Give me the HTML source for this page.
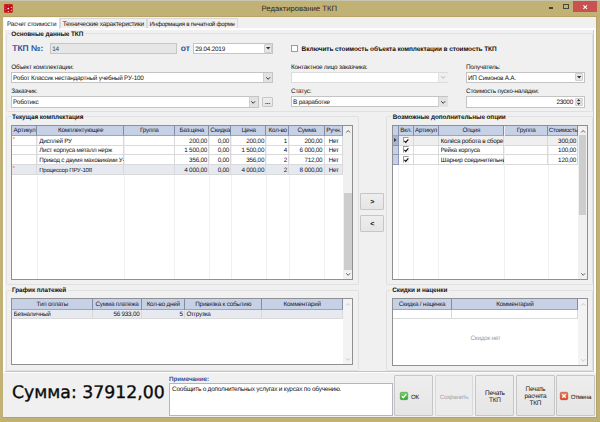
<!DOCTYPE html>
<html lang="ru">
<head>
<meta charset="utf-8">
<title>Редактирование ТКП</title>
<style>
html,body{margin:0;padding:0;}
body{width:600px;height:422px;overflow:hidden;text-rendering:geometricPrecision;background:#c2b175;font-family:"Liberation Sans",sans-serif;font-size:5.95px;color:#141414;position:relative;}
.a{position:absolute;white-space:nowrap;box-sizing:border-box;}
.inp{background:#fff;border:1px solid #c4c4c4;}
.btn{background:linear-gradient(#eeeeee,#e5e5e5);border:1px solid #c6c6c6;border-radius:1px;}
.grid{background:#fff;border:1px solid #8f9094;overflow:hidden;}
.hd{background:#c7d1e6;border-right:1px solid #7f8cab;border-bottom:1px solid #9fa5b3;}
.gb{border:1px solid #e0e0e0;border-radius:1.5px;}
svg{position:absolute;overflow:visible;}
</style>
</head>
<body>
<div class="a" style="left:0px;top:0px;width:600px;height:1.1px;background:#c6c6b3;"></div>
<div class="a" style="left:2.5px;top:16px;width:594.3px;height:401.8px;background:#b5a468;"></div>
<div class="a" style="left:3.2px;top:16.6px;width:593px;height:400.6px;background:#f0f0f0;"></div>
<div class="a" style="left:0px;top:4px;font-size:7.7px;line-height:9px;color:#2a2a2a;width:598.5px;text-align:center;">Редактирование ТКП</div>
<svg style="left:4.2px;top:4px" width="8.8" height="8.8" viewBox="0 0 8.8 8.8"><rect x="0" y="0" width="8.8" height="8.8" rx="1.4" fill="#c20f16"/><rect x=".5" y=".5" width="7.8" height="7.8" rx="1" fill="none" stroke="#d43a3c" stroke-width=".5"/><g fill="#fff"><circle cx="4.3" cy="4.5" r=".85"/><circle cx="7.3" cy="3.5" r=".6"/><circle cx="7.3" cy="6.4" r=".55" opacity=".85"/><circle cx="4.3" cy="7.5" r=".6"/><circle cx="4.3" cy="1.6" r=".45" opacity=".6"/><circle cx="1.8" cy="3" r=".5" opacity=".45"/><circle cx="1.8" cy="5.6" r=".5" opacity=".5"/></g></svg>
<div class="a" style="left:549px;top:7.2px;width:4.1px;height:1.7px;background:#45412f;"></div>
<div class="a" style="left:563px;top:4.3px;width:5.8px;height:4.5px;border:0.9px solid #4a4636;border-top-width:1.7px;"></div>
<div class="a" style="left:573px;top:1.2px;width:24px;height:10.5px;background:#c9514f;"></div>
<svg style="left:582.5px;top:4.5px" width="4.4" height="4.4" viewBox="0 0 4.4 4.4"><path d="M0.4 0.4 L4 4 M4 0.4 L0.4 4" stroke="#fff" stroke-width="1.05" fill="none"/></svg>
<div class="a" style="left:3.3px;top:28.3px;width:592.9px;height:345.2px;background:#fdfdfd;"></div>
<div class="a" style="left:5.3px;top:30.2px;width:588.9px;height:341.7px;background:#f0f0f0;border-right:1px solid #c9c9c9;border-bottom:1px solid #c4c4c4;"></div>
<div class="a" style="left:60px;top:18.3px;width:87px;height:10.2px;background:#f0f0f0;border:1px solid #d9d9d9;border-bottom:none;"></div>
<div class="a" style="left:146.5px;top:18.3px;width:91px;height:10.2px;background:#f0f0f0;border:1px solid #d9d9d9;border-bottom:none;"></div>
<div class="a" style="left:3.3px;top:17.1px;width:56.7px;height:12.2px;background:#fff;border:1px solid #f3f3f3;border-right-color:#dcdcdc;border-bottom:none;"></div>
<div class="a" style="left:3.3px;top:21px;font-size:6.4px;line-height:8px;width:56.7px;text-align:center;letter-spacing:-0.232px;">Расчет стоимости</div>
<div class="a" style="left:60px;top:21px;font-size:6.56px;line-height:8px;width:86.5px;text-align:center;letter-spacing:-0.238px;">Технические характеристики</div>
<div class="a" style="left:146.5px;top:21px;font-size:6.13px;line-height:7px;width:91.5px;text-align:center;letter-spacing:-0.222px;">Информация в печатной форме</div>
<div class="a gb" style="left:6.2px;top:33.2px;width:587.3px;height:79px;"></div>
<div class="a" style="left:9.8px;top:31px;font-size:6.41px;line-height:8px;color:#101010;font-weight:bold;letter-spacing:-0.088px;background:#f0f0f0;padding:0 1.5px;">Основные данные ТКП</div>
<div class="a" style="left:12.2px;top:43px;font-size:8.5px;line-height:10px;color:#34529a;font-weight:bold;">ТКП №:</div>
<div class="a" style="left:50px;top:43px;width:127.3px;height:11.3px;background:#e6e6e6;border:1px solid #c6c6c6;"></div>
<div class="a" style="left:52.3px;top:46px;font-size:6.4px;line-height:8px;color:#444;letter-spacing:-0.232px;">14</div>
<div class="a" style="left:180.7px;top:43px;font-size:8.5px;line-height:10px;color:#34529a;font-weight:bold;">от</div>
<div class="a inp" style="left:193.2px;top:43.2px;width:79.9px;height:10.9px;"></div>
<div class="a" style="left:195.3px;top:46px;font-size:6.4px;line-height:8px;letter-spacing:-0.232px;">29.04.2019</div>
<div class="a btn" style="left:264px;top:44.3px;width:7.8px;height:8.5px;border-color:#cfcfcf;background:#e7e7e7;"></div>
<svg style="left:265.7px;top:47.4px" width="4.4" height="2.6" viewBox="0 0 4.4 2.6"><path d="M0 0 L4.4 0 L2.2 2.6 Z" fill="#333"/></svg>
<div class="a" style="left:291.3px;top:45px;width:6.8px;height:7px;background:#fff;border:1px solid #9c9c9c;"></div>
<div class="a" style="left:301.6px;top:46px;font-size:6.5px;line-height:8px;color:#101010;font-weight:bold;letter-spacing:-0.089px;">Включить стоимость объекта комплектации в стоимость ТКП</div>
<div class="a" style="left:11.3px;top:64px;font-size:6.4px;line-height:8px;letter-spacing:-0.232px;">Объект комплектации:</div>
<div class="a inp" style="left:11.3px;top:71.8px;width:262px;height:11.3px;border-color:#c4c4c4;"></div>
<div class="a" style="left:263.3px;top:72.6px;width:9.2px;height:9.7px;background:#e2e2e2;border-left:1px solid #cfcfcf;"></div>
<svg style="left:265.8px;top:76.55px" width="4.4" height="2.8" viewBox="0 0 4.4 2.8"><path d="M0.3 0.3 L2.2 2.3 L4.1 0.3" stroke="#333" stroke-width="1" fill="none"/></svg>
<div class="a" style="left:13.1px;top:75px;font-size:6.4px;line-height:8px;letter-spacing:-0.232px;">Робот Классик нестандартный учебный РУ-100</div>
<div class="a" style="left:291px;top:64px;font-size:6.4px;line-height:8px;letter-spacing:-0.232px;">Контактное лицо заказчика:</div>
<div class="a inp" style="left:291.3px;top:71.7px;width:157.1px;height:10.9px;border-color:#dcdcdc;"></div>
<div class="a" style="left:438.4px;top:72.5px;width:9.2px;height:9.3px;background:#efefef;border-left:1px solid #e2e2e2;"></div>
<svg style="left:440.9px;top:76.25px" width="4.4" height="2.8" viewBox="0 0 4.4 2.8"><path d="M0.3 0.3 L2.2 2.3 L4.1 0.3" stroke="#b5b5b5" stroke-width="1" fill="none"/></svg>
<div class="a" style="left:466px;top:64px;font-size:6.4px;line-height:8px;letter-spacing:-0.232px;">Получатель:</div>
<div class="a inp" style="left:466px;top:71.7px;width:118.7px;height:10.9px;"></div>
<div class="a" style="left:468px;top:75px;font-size:6.4px;line-height:8px;letter-spacing:-0.232px;">ИП Симонов А.А.</div>
<div class="a btn" style="left:574.7px;top:73px;width:8px;height:8px;border-color:#cfcfcf;background:#e7e7e7;"></div>
<svg style="left:576.5px;top:75.9px" width="4.4" height="2.6" viewBox="0 0 4.4 2.6"><path d="M0 0 L4.4 0 L2.2 2.6 Z" fill="#333"/></svg>
<div class="a" style="left:11.3px;top:88px;font-size:6.4px;line-height:8px;letter-spacing:-0.232px;">Заказчик:</div>
<div class="a inp" style="left:11.3px;top:96.4px;width:247.4px;height:11.2px;border-color:#c4c4c4;"></div>
<div class="a" style="left:248.7px;top:97.2px;width:9.2px;height:9.6px;background:#e2e2e2;border-left:1px solid #cfcfcf;"></div>
<svg style="left:251.2px;top:101.1px" width="4.4" height="2.8" viewBox="0 0 4.4 2.8"><path d="M0.3 0.3 L2.2 2.3 L4.1 0.3" stroke="#333" stroke-width="1" fill="none"/></svg>
<div class="a" style="left:13.1px;top:99px;font-size:6.4px;line-height:8px;letter-spacing:-0.232px;">Роботикс</div>
<div class="a btn" style="left:262.4px;top:96.7px;width:10.4px;height:10.2px;"></div>
<div class="a" style="left:262.4px;top:99px;font-size:6.35px;line-height:8px;color:#111;font-weight:bold;width:10.4px;text-align:center;letter-spacing:-0.087px;">...</div>
<div class="a" style="left:291px;top:88px;font-size:6.4px;line-height:8px;letter-spacing:-0.232px;">Статус:</div>
<div class="a inp" style="left:291.3px;top:96.3px;width:157.1px;height:11.2px;border-color:#c4c4c4;"></div>
<div class="a" style="left:438.4px;top:97.1px;width:9.2px;height:9.6px;background:#e2e2e2;border-left:1px solid #cfcfcf;"></div>
<svg style="left:440.9px;top:101px" width="4.4" height="2.8" viewBox="0 0 4.4 2.8"><path d="M0.3 0.3 L2.2 2.3 L4.1 0.3" stroke="#333" stroke-width="1" fill="none"/></svg>
<div class="a" style="left:293.1px;top:99px;font-size:6.4px;line-height:8px;letter-spacing:-0.232px;">В разработке</div>
<div class="a" style="left:466px;top:88px;font-size:6.4px;line-height:8px;letter-spacing:-0.232px;">Стоимость пуско-наладки:</div>
<div class="a inp" style="left:466px;top:96.3px;width:118.7px;height:11.3px;"></div>
<div class="a" style="left:540px;top:99px;font-size:6.4px;line-height:8px;width:33px;text-align:right;letter-spacing:-0.232px;">23000</div>
<div class="a btn" style="left:574.7px;top:98px;width:8px;height:4.1px;border-color:#cfcfcf;background:#e7e7e7;"></div>
<div class="a btn" style="left:574.7px;top:102px;width:8px;height:4.1px;border-color:#cfcfcf;background:#e7e7e7;"></div>
<svg style="left:577px;top:99.1px" width="3.4" height="6" viewBox="0 0 3.4 6"><path d="M0 1.9 L1.7 0 L3.4 1.9 Z M0 4.1 L1.7 6 L3.4 4.1 Z" fill="#333"/></svg>
<div class="a gb" style="left:6.2px;top:116.3px;width:352.7px;height:168.5px;"></div>
<div class="a" style="left:10.5px;top:114px;font-size:6.41px;line-height:8px;color:#101010;font-weight:bold;letter-spacing:-0.088px;background:#f0f0f0;padding:0 1.5px;">Текущая комплектация</div>
<div class="a grid" style="left:11.3px;top:125px;width:342.2px;height:155px;">
<div class="a" style="left:24.5px;top:0;width:1px;height:155px;background:#f0f0f0;"></div>
<div class="a" style="left:111.5px;top:0;width:1px;height:155px;background:#f0f0f0;"></div>
<div class="a" style="left:161.8px;top:0;width:1px;height:155px;background:#f0f0f0;"></div>
<div class="a" style="left:196.5px;top:0;width:1px;height:155px;background:#f0f0f0;"></div>
<div class="a" style="left:218.5px;top:0;width:1px;height:155px;background:#f0f0f0;"></div>
<div class="a" style="left:253.6px;top:0;width:1px;height:155px;background:#f0f0f0;"></div>
<div class="a" style="left:276.5px;top:0;width:1px;height:155px;background:#f0f0f0;"></div>
<div class="a" style="left:311.8px;top:0;width:1px;height:155px;background:#f0f0f0;"></div>
<div class="a" style="left:330.3px;top:0;width:1px;height:155px;background:#f0f0f0;"></div>
<div class="a" style="left:0;top:39.01px;width:330.9px;height:9.57px;background:#e7e9f0;"></div>
<div class="a" style="left:0px;top:10.3px;width:25.1px;height:9.57px;border-right:1px solid #d9d9d9;border-bottom:1px solid #d9d9d9;"></div>
<div class="a" style="left:25.1px;top:10.3px;width:87px;height:9.57px;border-right:1px solid #d9d9d9;border-bottom:1px solid #d9d9d9;"></div>
<div class="a" style="left:112.1px;top:10.3px;width:50.3px;height:9.57px;border-right:1px solid #d9d9d9;border-bottom:1px solid #d9d9d9;"></div>
<div class="a" style="left:162.4px;top:10.3px;width:34.7px;height:9.57px;border-right:1px solid #d9d9d9;border-bottom:1px solid #d9d9d9;"></div>
<div class="a" style="left:197.1px;top:10.3px;width:22px;height:9.57px;border-right:1px solid #d9d9d9;border-bottom:1px solid #d9d9d9;"></div>
<div class="a" style="left:219.1px;top:10.3px;width:35.1px;height:9.57px;border-right:1px solid #d9d9d9;border-bottom:1px solid #d9d9d9;"></div>
<div class="a" style="left:254.2px;top:10.3px;width:22.9px;height:9.57px;border-right:1px solid #d9d9d9;border-bottom:1px solid #d9d9d9;"></div>
<div class="a" style="left:277.1px;top:10.3px;width:35.3px;height:9.57px;border-right:1px solid #d9d9d9;border-bottom:1px solid #d9d9d9;"></div>
<div class="a" style="left:312.4px;top:10.3px;width:18.5px;height:9.57px;border-right:1px solid #d9d9d9;border-bottom:1px solid #d9d9d9;"></div>
<div class="a" style="left:0px;top:19.87px;width:25.1px;height:9.57px;border-right:1px solid #d9d9d9;border-bottom:1px solid #d9d9d9;"></div>
<div class="a" style="left:25.1px;top:19.87px;width:87px;height:9.57px;border-right:1px solid #d9d9d9;border-bottom:1px solid #d9d9d9;"></div>
<div class="a" style="left:112.1px;top:19.87px;width:50.3px;height:9.57px;border-right:1px solid #d9d9d9;border-bottom:1px solid #d9d9d9;"></div>
<div class="a" style="left:162.4px;top:19.87px;width:34.7px;height:9.57px;border-right:1px solid #d9d9d9;border-bottom:1px solid #d9d9d9;"></div>
<div class="a" style="left:197.1px;top:19.87px;width:22px;height:9.57px;border-right:1px solid #d9d9d9;border-bottom:1px solid #d9d9d9;"></div>
<div class="a" style="left:219.1px;top:19.87px;width:35.1px;height:9.57px;border-right:1px solid #d9d9d9;border-bottom:1px solid #d9d9d9;"></div>
<div class="a" style="left:254.2px;top:19.87px;width:22.9px;height:9.57px;border-right:1px solid #d9d9d9;border-bottom:1px solid #d9d9d9;"></div>
<div class="a" style="left:277.1px;top:19.87px;width:35.3px;height:9.57px;border-right:1px solid #d9d9d9;border-bottom:1px solid #d9d9d9;"></div>
<div class="a" style="left:312.4px;top:19.87px;width:18.5px;height:9.57px;border-right:1px solid #d9d9d9;border-bottom:1px solid #d9d9d9;"></div>
<div class="a" style="left:0px;top:29.44px;width:25.1px;height:9.57px;border-right:1px solid #d9d9d9;border-bottom:1px solid #d9d9d9;"></div>
<div class="a" style="left:25.1px;top:29.44px;width:87px;height:9.57px;border-right:1px solid #d9d9d9;border-bottom:1px solid #d9d9d9;"></div>
<div class="a" style="left:112.1px;top:29.44px;width:50.3px;height:9.57px;border-right:1px solid #d9d9d9;border-bottom:1px solid #d9d9d9;"></div>
<div class="a" style="left:162.4px;top:29.44px;width:34.7px;height:9.57px;border-right:1px solid #d9d9d9;border-bottom:1px solid #d9d9d9;"></div>
<div class="a" style="left:197.1px;top:29.44px;width:22px;height:9.57px;border-right:1px solid #d9d9d9;border-bottom:1px solid #d9d9d9;"></div>
<div class="a" style="left:219.1px;top:29.44px;width:35.1px;height:9.57px;border-right:1px solid #d9d9d9;border-bottom:1px solid #d9d9d9;"></div>
<div class="a" style="left:254.2px;top:29.44px;width:22.9px;height:9.57px;border-right:1px solid #d9d9d9;border-bottom:1px solid #d9d9d9;"></div>
<div class="a" style="left:277.1px;top:29.44px;width:35.3px;height:9.57px;border-right:1px solid #d9d9d9;border-bottom:1px solid #d9d9d9;"></div>
<div class="a" style="left:312.4px;top:29.44px;width:18.5px;height:9.57px;border-right:1px solid #d9d9d9;border-bottom:1px solid #d9d9d9;"></div>
<div class="a" style="left:0px;top:39.01px;width:25.1px;height:9.57px;border-right:1px solid #d9d9d9;border-bottom:1px solid #d9d9d9;"></div>
<div class="a" style="left:25.1px;top:39.01px;width:87px;height:9.57px;border-right:1px solid #d9d9d9;border-bottom:1px solid #d9d9d9;"></div>
<div class="a" style="left:112.1px;top:39.01px;width:50.3px;height:9.57px;border-right:1px solid #d9d9d9;border-bottom:1px solid #d9d9d9;"></div>
<div class="a" style="left:162.4px;top:39.01px;width:34.7px;height:9.57px;border-right:1px solid #d9d9d9;border-bottom:1px solid #d9d9d9;"></div>
<div class="a" style="left:197.1px;top:39.01px;width:22px;height:9.57px;border-right:1px solid #d9d9d9;border-bottom:1px solid #d9d9d9;"></div>
<div class="a" style="left:219.1px;top:39.01px;width:35.1px;height:9.57px;border-right:1px solid #d9d9d9;border-bottom:1px solid #d9d9d9;"></div>
<div class="a" style="left:254.2px;top:39.01px;width:22.9px;height:9.57px;border-right:1px solid #d9d9d9;border-bottom:1px solid #d9d9d9;"></div>
<div class="a" style="left:277.1px;top:39.01px;width:35.3px;height:9.57px;border-right:1px solid #d9d9d9;border-bottom:1px solid #d9d9d9;"></div>
<div class="a" style="left:312.4px;top:39.01px;width:18.5px;height:9.57px;border-right:1px solid #d9d9d9;border-bottom:1px solid #d9d9d9;"></div>
<div class="a hd" style="left:0px;top:0;width:25.1px;height:10.3px;"></div>
<div class="a hd" style="left:25.1px;top:0;width:87px;height:10.3px;"></div>
<div class="a hd" style="left:112.1px;top:0;width:50.3px;height:10.3px;"></div>
<div class="a hd" style="left:162.4px;top:0;width:34.7px;height:10.3px;"></div>
<div class="a hd" style="left:197.1px;top:0;width:22px;height:10.3px;"></div>
<div class="a hd" style="left:219.1px;top:0;width:35.1px;height:10.3px;"></div>
<div class="a hd" style="left:254.2px;top:0;width:22.9px;height:10.3px;"></div>
<div class="a hd" style="left:277.1px;top:0;width:35.3px;height:10.3px;"></div>
<div class="a hd" style="left:312.4px;top:0;width:18.5px;height:10.3px;"></div>
</div>
<div class="a" style="left:12.3px;top:127px;font-size:6.34px;line-height:8px;color:#1c1c2a;width:24.6px;text-align:center;letter-spacing:-0.230px;">Артикул</div>
<div class="a" style="left:37.4px;top:127px;font-size:6.34px;line-height:8px;color:#1c1c2a;width:86.5px;text-align:center;letter-spacing:-0.230px;">Комплектующее</div>
<div class="a" style="left:124.4px;top:127px;font-size:6.34px;line-height:8px;color:#1c1c2a;width:49.8px;text-align:center;letter-spacing:-0.230px;">Группа</div>
<div class="a" style="left:174.7px;top:127px;font-size:6.34px;line-height:8px;color:#1c1c2a;width:34.2px;text-align:center;letter-spacing:-0.230px;">Баз.цена</div>
<div class="a" style="left:209.4px;top:127px;font-size:6.34px;line-height:8px;color:#1c1c2a;width:21.5px;text-align:center;letter-spacing:-0.230px;">Скидка</div>
<div class="a" style="left:231.4px;top:127px;font-size:6.34px;line-height:8px;color:#1c1c2a;width:34.6px;text-align:center;letter-spacing:-0.230px;">Цена</div>
<div class="a" style="left:266.5px;top:127px;font-size:6.34px;line-height:8px;color:#1c1c2a;width:22.4px;text-align:center;letter-spacing:-0.230px;">Кол-во</div>
<div class="a" style="left:289.4px;top:127px;font-size:6.34px;line-height:8px;color:#1c1c2a;width:34.8px;text-align:center;letter-spacing:-0.230px;">Сумма</div>
<div class="a" style="left:324.7px;top:127px;font-size:6.34px;line-height:8px;color:#1c1c2a;width:18px;text-align:center;letter-spacing:-0.230px;">Ручн.</div>
<div class="a" style="left:12.8px;top:137px;font-size:5.74px;line-height:7px;color:#f5a033;font-weight:bold;letter-spacing:-0.078px;">*</div>
<div class="a" style="left:39.2px;top:138px;font-size:6.34px;line-height:8px;width:84.6px;letter-spacing:-0.230px;overflow:hidden;">Дисплей РУ</div>
<div class="a" style="left:174.7px;top:138px;font-size:6.34px;line-height:8px;width:32.4px;text-align:right;letter-spacing:-0.230px;">200,00</div>
<div class="a" style="left:209.4px;top:138px;font-size:6.34px;line-height:8px;width:19.7px;text-align:right;letter-spacing:-0.230px;">0,00</div>
<div class="a" style="left:231.4px;top:138px;font-size:6.34px;line-height:8px;width:32.8px;text-align:right;letter-spacing:-0.230px;">200,00</div>
<div class="a" style="left:266.5px;top:138px;font-size:6.34px;line-height:8px;width:20.6px;text-align:right;letter-spacing:-0.230px;">1</div>
<div class="a" style="left:289.4px;top:138px;font-size:6.34px;line-height:8px;width:33px;text-align:right;letter-spacing:-0.230px;">200,00</div>
<div class="a" style="left:324.7px;top:138px;font-size:6.34px;line-height:8px;width:18px;text-align:center;letter-spacing:-0.230px;">Нет</div>
<div class="a" style="left:39.2px;top:147px;font-size:6.34px;line-height:8px;width:84.6px;letter-spacing:-0.230px;overflow:hidden;">Лист корпуса металл нерж</div>
<div class="a" style="left:174.7px;top:147px;font-size:6.34px;line-height:8px;width:32.4px;text-align:right;letter-spacing:-0.230px;">1 500,00</div>
<div class="a" style="left:209.4px;top:147px;font-size:6.34px;line-height:8px;width:19.7px;text-align:right;letter-spacing:-0.230px;">0,00</div>
<div class="a" style="left:231.4px;top:147px;font-size:6.34px;line-height:8px;width:32.8px;text-align:right;letter-spacing:-0.230px;">1 500,00</div>
<div class="a" style="left:266.5px;top:147px;font-size:6.34px;line-height:8px;width:20.6px;text-align:right;letter-spacing:-0.230px;">4</div>
<div class="a" style="left:289.4px;top:147px;font-size:6.34px;line-height:8px;width:33px;text-align:right;letter-spacing:-0.230px;">6 000,00</div>
<div class="a" style="left:324.7px;top:147px;font-size:6.34px;line-height:8px;width:18px;text-align:center;letter-spacing:-0.230px;">Нет</div>
<div class="a" style="left:39.2px;top:157px;font-size:6.34px;line-height:8px;width:84.6px;letter-spacing:-0.230px;overflow:hidden;">Привод с двумя маховиками У-</div>
<div class="a" style="left:174.7px;top:157px;font-size:6.34px;line-height:8px;width:32.4px;text-align:right;letter-spacing:-0.230px;">356,00</div>
<div class="a" style="left:209.4px;top:157px;font-size:6.34px;line-height:8px;width:19.7px;text-align:right;letter-spacing:-0.230px;">0,00</div>
<div class="a" style="left:231.4px;top:157px;font-size:6.34px;line-height:8px;width:32.8px;text-align:right;letter-spacing:-0.230px;">356,00</div>
<div class="a" style="left:266.5px;top:157px;font-size:6.34px;line-height:8px;width:20.6px;text-align:right;letter-spacing:-0.230px;">2</div>
<div class="a" style="left:289.4px;top:157px;font-size:6.34px;line-height:8px;width:33px;text-align:right;letter-spacing:-0.230px;">712,00</div>
<div class="a" style="left:324.7px;top:157px;font-size:6.34px;line-height:8px;width:18px;text-align:center;letter-spacing:-0.230px;">Нет</div>
<div class="a" style="left:12.8px;top:166px;font-size:5.74px;line-height:7px;color:#f5a033;font-weight:bold;letter-spacing:-0.078px;">*</div>
<div class="a" style="left:39.2px;top:168px;font-size:6.04px;line-height:7px;width:84.6px;letter-spacing:-0.219px;overflow:hidden;">Процессор ПРУ-108</div>
<div class="a" style="left:174.7px;top:167px;font-size:6.34px;line-height:8px;width:32.4px;text-align:right;letter-spacing:-0.230px;">4 000,00</div>
<div class="a" style="left:209.4px;top:167px;font-size:6.34px;line-height:8px;width:19.7px;text-align:right;letter-spacing:-0.230px;">0,00</div>
<div class="a" style="left:231.4px;top:167px;font-size:6.34px;line-height:8px;width:32.8px;text-align:right;letter-spacing:-0.230px;">4 000,00</div>
<div class="a" style="left:266.5px;top:167px;font-size:6.34px;line-height:8px;width:20.6px;text-align:right;letter-spacing:-0.230px;">2</div>
<div class="a" style="left:289.4px;top:167px;font-size:6.34px;line-height:8px;width:33px;text-align:right;letter-spacing:-0.230px;">8 000,00</div>
<div class="a" style="left:324.7px;top:167px;font-size:6.34px;line-height:8px;width:18px;text-align:center;letter-spacing:-0.230px;">Нет</div>
<div class="a" style="left:343.2px;top:126px;width:9.3px;height:153px;background:#f0f0f0;"></div>
<svg style="left:345.65px;top:129.6px" width="4.4" height="2.8" viewBox="0 0 4.4 2.8"><path d="M0.3 2.5 L2.2 0.5 L4.1 2.5" stroke="#606060" stroke-width="1" fill="none"/></svg>
<svg style="left:345.65px;top:272.8px" width="4.4" height="2.8" viewBox="0 0 4.4 2.8"><path d="M0.3 0.3 L2.2 2.3 L4.1 0.3" stroke="#606060" stroke-width="1" fill="none"/></svg>
<div class="a" style="left:344.1px;top:193.3px;width:7.5px;height:76.7px;background:#cdcdcd;"></div>
<div class="a btn" style="left:360.3px;top:193.1px;width:23.6px;height:17.3px;"></div>
<div class="a" style="left:360.5px;top:199px;font-size:7.07px;line-height:8px;color:#111;font-weight:bold;width:23.4px;text-align:center;letter-spacing:-0.097px;">&gt;</div>
<div class="a btn" style="left:360.3px;top:214.9px;width:23.6px;height:17.3px;"></div>
<div class="a" style="left:360.5px;top:221px;font-size:7.07px;line-height:8px;color:#111;font-weight:bold;width:23.4px;text-align:center;letter-spacing:-0.097px;">&lt;</div>
<div class="a gb" style="left:386.3px;top:116.3px;width:207.2px;height:168.5px;"></div>
<div class="a" style="left:391.2px;top:114px;font-size:6.41px;line-height:8px;color:#101010;font-weight:bold;letter-spacing:-0.088px;background:#f0f0f0;padding:0 1.5px;">Возможные дополнительные опции</div>
<div class="a grid" style="left:392px;top:125px;width:196.2px;height:155px;">
<div class="a" style="left:5.2px;top:0;width:1px;height:155px;background:#f0f0f0;"></div>
<div class="a" style="left:20.2px;top:0;width:1px;height:155px;background:#f0f0f0;"></div>
<div class="a" style="left:45.2px;top:0;width:1px;height:155px;background:#f0f0f0;"></div>
<div class="a" style="left:110.9px;top:0;width:1px;height:155px;background:#f0f0f0;"></div>
<div class="a" style="left:154.8px;top:0;width:1px;height:155px;background:#f0f0f0;"></div>
<div class="a" style="left:184.8px;top:0;width:1px;height:155px;background:#f0f0f0;"></div>
<div class="a" style="left:0;top:10.3px;width:185.4px;height:9.57px;background:#efefef;"></div>
<div class="a" style="left:0px;top:10.3px;width:5.8px;height:9.57px;border-right:1px solid #d9d9d9;border-bottom:1px solid #d9d9d9;background:#a9b4cd;border-color:#8593b3;"></div>
<div class="a" style="left:5.8px;top:10.3px;width:15px;height:9.57px;border-right:1px solid #d9d9d9;border-bottom:1px solid #d9d9d9;"></div>
<div class="a" style="left:20.7px;top:10.3px;width:25.1px;height:9.57px;border-right:1px solid #d9d9d9;border-bottom:1px solid #d9d9d9;"></div>
<div class="a" style="left:45.8px;top:10.3px;width:65.7px;height:9.57px;border-right:1px solid #d9d9d9;border-bottom:1px solid #d9d9d9;"></div>
<div class="a" style="left:111.5px;top:10.3px;width:43.9px;height:9.57px;border-right:1px solid #d9d9d9;border-bottom:1px solid #d9d9d9;"></div>
<div class="a" style="left:155.4px;top:10.3px;width:30px;height:9.57px;border-right:1px solid #d9d9d9;border-bottom:1px solid #d9d9d9;"></div>
<div class="a" style="left:0px;top:19.87px;width:5.8px;height:9.57px;border-right:1px solid #d9d9d9;border-bottom:1px solid #d9d9d9;background:#c7d1e6;border-color:#8e99b5;"></div>
<div class="a" style="left:5.8px;top:19.87px;width:15px;height:9.57px;border-right:1px solid #d9d9d9;border-bottom:1px solid #d9d9d9;"></div>
<div class="a" style="left:20.7px;top:19.87px;width:25.1px;height:9.57px;border-right:1px solid #d9d9d9;border-bottom:1px solid #d9d9d9;"></div>
<div class="a" style="left:45.8px;top:19.87px;width:65.7px;height:9.57px;border-right:1px solid #d9d9d9;border-bottom:1px solid #d9d9d9;"></div>
<div class="a" style="left:111.5px;top:19.87px;width:43.9px;height:9.57px;border-right:1px solid #d9d9d9;border-bottom:1px solid #d9d9d9;"></div>
<div class="a" style="left:155.4px;top:19.87px;width:30px;height:9.57px;border-right:1px solid #d9d9d9;border-bottom:1px solid #d9d9d9;"></div>
<div class="a" style="left:0px;top:29.44px;width:5.8px;height:9.57px;border-right:1px solid #d9d9d9;border-bottom:1px solid #d9d9d9;background:#c7d1e6;border-color:#8e99b5;"></div>
<div class="a" style="left:5.8px;top:29.44px;width:15px;height:9.57px;border-right:1px solid #d9d9d9;border-bottom:1px solid #d9d9d9;"></div>
<div class="a" style="left:20.7px;top:29.44px;width:25.1px;height:9.57px;border-right:1px solid #d9d9d9;border-bottom:1px solid #d9d9d9;"></div>
<div class="a" style="left:45.8px;top:29.44px;width:65.7px;height:9.57px;border-right:1px solid #d9d9d9;border-bottom:1px solid #d9d9d9;"></div>
<div class="a" style="left:111.5px;top:29.44px;width:43.9px;height:9.57px;border-right:1px solid #d9d9d9;border-bottom:1px solid #d9d9d9;"></div>
<div class="a" style="left:155.4px;top:29.44px;width:30px;height:9.57px;border-right:1px solid #d9d9d9;border-bottom:1px solid #d9d9d9;"></div>
<div class="a hd" style="left:0px;top:0;width:5.8px;height:10.3px;"></div>
<div class="a hd" style="left:5.8px;top:0;width:15px;height:10.3px;"></div>
<div class="a hd" style="left:20.7px;top:0;width:25.1px;height:10.3px;"></div>
<div class="a hd" style="left:45.8px;top:0;width:65.7px;height:10.3px;"></div>
<div class="a hd" style="left:111.5px;top:0;width:43.9px;height:10.3px;"></div>
<div class="a hd" style="left:155.4px;top:0;width:30px;height:10.3px;"></div>
</div>
<div class="a" style="left:398.8px;top:127px;font-size:6.34px;line-height:8px;color:#1c1c2a;width:14.5px;text-align:center;letter-spacing:-0.230px;">Вкл.</div>
<div class="a" style="left:413.7px;top:127px;font-size:6.34px;line-height:8px;color:#1c1c2a;width:24.6px;text-align:center;letter-spacing:-0.230px;">Артикул</div>
<div class="a" style="left:438.8px;top:127px;font-size:6.34px;line-height:8px;color:#1c1c2a;width:65.2px;text-align:center;letter-spacing:-0.230px;">Опция</div>
<div class="a" style="left:504.5px;top:127px;font-size:6.34px;line-height:8px;color:#1c1c2a;width:43.4px;text-align:center;letter-spacing:-0.230px;">Группа</div>
<div class="a" style="left:548.8px;top:127px;font-size:6.15px;line-height:7px;color:#1c1c2a;letter-spacing:-0.223px;">Стоимость</div>
<div class="a" style="left:440.6px;top:138px;font-size:6.34px;line-height:8px;width:63.3px;letter-spacing:-0.230px;overflow:hidden;">Колёса робота в сборе</div>
<div class="a" style="left:548.4px;top:138px;font-size:6.34px;line-height:8px;width:27.7px;text-align:right;letter-spacing:-0.230px;">300,00</div>
<div class="a" style="left:440.6px;top:147px;font-size:6.34px;line-height:8px;width:63.3px;letter-spacing:-0.230px;overflow:hidden;">Рейка корпуса</div>
<div class="a" style="left:548.4px;top:147px;font-size:6.34px;line-height:8px;width:27.7px;text-align:right;letter-spacing:-0.230px;">100,00</div>
<div class="a" style="left:440.6px;top:157px;font-size:6.34px;line-height:8px;width:63.3px;letter-spacing:-0.230px;overflow:hidden;">Шарнир соединительный</div>
<div class="a" style="left:548.4px;top:157px;font-size:6.34px;line-height:8px;width:27.7px;text-align:right;letter-spacing:-0.230px;">120,00</div>
<div class="a" style="left:578.4px;top:126px;width:8.8px;height:153px;background:#f0f0f0;"></div>
<svg style="left:580.6px;top:129.6px" width="4.4" height="2.8" viewBox="0 0 4.4 2.8"><path d="M0.3 2.5 L2.2 0.5 L4.1 2.5" stroke="#606060" stroke-width="1" fill="none"/></svg>
<svg style="left:580.6px;top:272.8px" width="4.4" height="2.8" viewBox="0 0 4.4 2.8"><path d="M0.3 0.3 L2.2 2.3 L4.1 0.3" stroke="#606060" stroke-width="1" fill="none"/></svg>
<div class="a" style="left:579.3px;top:135.3px;width:7px;height:79.7px;background:#cdcdcd;"></div>
<svg style="left:394.2px;top:138.1px" width="2.6" height="4" viewBox="0 0 2.6 4"><path d="M0 0 L2.6 2 L0 4 Z" fill="#3a3a4a"/></svg>
<div class="a" style="left:402.6px;top:136.6px;width:6.6px;height:6.8px;background:#fff;border:1px solid #f2f2f2;border-top-color:#9d9d9d;border-left-color:#9d9d9d;"></div>
<svg style="left:403.9px;top:138.6px" width="4.6" height="4" viewBox="0 0 4.6 4"><path d="M0.4 1.8 L1.8 3.4 L4.3 0.4" stroke="#0c0c0c" stroke-width="1.15" fill="none"/></svg>
<div class="a" style="left:402.6px;top:146.17px;width:6.6px;height:6.8px;background:#fff;border:1px solid #f2f2f2;border-top-color:#9d9d9d;border-left-color:#9d9d9d;"></div>
<svg style="left:403.9px;top:148.17px" width="4.6" height="4" viewBox="0 0 4.6 4"><path d="M0.4 1.8 L1.8 3.4 L4.3 0.4" stroke="#0c0c0c" stroke-width="1.15" fill="none"/></svg>
<div class="a" style="left:402.6px;top:155.74px;width:6.6px;height:6.8px;background:#fff;border:1px solid #f2f2f2;border-top-color:#9d9d9d;border-left-color:#9d9d9d;"></div>
<svg style="left:403.9px;top:157.74px" width="4.6" height="4" viewBox="0 0 4.6 4"><path d="M0.4 1.8 L1.8 3.4 L4.3 0.4" stroke="#0c0c0c" stroke-width="1.15" fill="none"/></svg>
<div class="a gb" style="left:6.2px;top:289.6px;width:352.7px;height:81px;"></div>
<div class="a" style="left:10.5px;top:287px;font-size:6.41px;line-height:8px;color:#101010;font-weight:bold;letter-spacing:-0.088px;background:#f0f0f0;padding:0 1.5px;">График платежей</div>
<div class="a grid" style="left:11.3px;top:298.3px;width:342.2px;height:67px;">
<div class="a" style="left:0;top:10.3px;width:330.9px;height:9.57px;background:#e7e9f0;"></div>
<div class="a" style="left:0px;top:10.3px;width:80.5px;height:9.57px;border-right:1px solid #d9d9d9;border-bottom:1px solid #d9d9d9;"></div>
<div class="a" style="left:80.5px;top:10.3px;width:49px;height:9.57px;border-right:1px solid #d9d9d9;border-bottom:1px solid #d9d9d9;"></div>
<div class="a" style="left:129.5px;top:10.3px;width:43.4px;height:9.57px;border-right:1px solid #d9d9d9;border-bottom:1px solid #d9d9d9;"></div>
<div class="a" style="left:172.9px;top:10.3px;width:76.6px;height:9.57px;border-right:1px solid #d9d9d9;border-bottom:1px solid #d9d9d9;"></div>
<div class="a" style="left:249.5px;top:10.3px;width:81.4px;height:9.57px;border-right:1px solid #d9d9d9;border-bottom:1px solid #d9d9d9;"></div>
<div class="a hd" style="left:0px;top:0;width:80.5px;height:10.3px;"></div>
<div class="a hd" style="left:80.5px;top:0;width:49px;height:10.3px;"></div>
<div class="a hd" style="left:129.5px;top:0;width:43.4px;height:10.3px;"></div>
<div class="a hd" style="left:172.9px;top:0;width:76.6px;height:10.3px;"></div>
<div class="a hd" style="left:249.5px;top:0;width:81.4px;height:10.3px;"></div>
</div>
<div class="a" style="left:12.3px;top:301px;font-size:6.34px;line-height:8px;color:#1c1c2a;width:80px;text-align:center;letter-spacing:-0.230px;">Тип оплаты</div>
<div class="a" style="left:92.8px;top:301px;font-size:6.34px;line-height:8px;color:#1c1c2a;width:48.5px;text-align:center;letter-spacing:-0.230px;">Сумма платежа</div>
<div class="a" style="left:141.8px;top:301px;font-size:6.34px;line-height:8px;color:#1c1c2a;width:42.9px;text-align:center;letter-spacing:-0.230px;">Кол-во дней</div>
<div class="a" style="left:185.2px;top:301px;font-size:6.34px;line-height:8px;color:#1c1c2a;width:76.1px;text-align:center;letter-spacing:-0.230px;">Привязка к событию</div>
<div class="a" style="left:261.8px;top:301px;font-size:6.34px;line-height:8px;color:#1c1c2a;width:80.9px;text-align:center;letter-spacing:-0.230px;">Комментарий</div>
<div class="a" style="left:13.5px;top:311px;font-size:6.34px;line-height:8px;width:78.7px;letter-spacing:-0.230px;overflow:hidden;">Безналичный</div>
<div class="a" style="left:92.8px;top:311px;font-size:6.34px;line-height:8px;width:46.7px;text-align:right;letter-spacing:-0.230px;">56 933,00</div>
<div class="a" style="left:141.8px;top:311px;font-size:6.34px;line-height:8px;width:41.1px;text-align:right;letter-spacing:-0.230px;">5</div>
<div class="a" style="left:186.4px;top:311px;font-size:6.34px;line-height:8px;width:74.8px;letter-spacing:-0.230px;overflow:hidden;">Отгрузка</div>
<div class="a" style="left:343.2px;top:299.3px;width:9.3px;height:65px;background:#f3f3f3;"></div>
<svg style="left:345.65px;top:302.9px" width="4.4" height="2.8" viewBox="0 0 4.4 2.8"><path d="M0.3 2.5 L2.2 0.5 L4.1 2.5" stroke="#c8c8c8" stroke-width="1" fill="none"/></svg>
<svg style="left:345.65px;top:358.1px" width="4.4" height="2.8" viewBox="0 0 4.4 2.8"><path d="M0.3 0.3 L2.2 2.3 L4.1 0.3" stroke="#c8c8c8" stroke-width="1" fill="none"/></svg>
<div class="a gb" style="left:386.3px;top:289.6px;width:207.2px;height:81px;"></div>
<div class="a" style="left:390.8px;top:287px;font-size:6.41px;line-height:8px;color:#101010;font-weight:bold;letter-spacing:-0.088px;background:#f0f0f0;padding:0 1.5px;">Скидки и наценки</div>
<div class="a grid" style="left:391.7px;top:298.3px;width:196.5px;height:67.5px;">
<div class="a" style="left:0px;top:10.3px;width:59.1px;height:9.57px;border-right:1px solid #d9d9d9;border-bottom:1px solid #d9d9d9;"></div>
<div class="a" style="left:59.1px;top:10.3px;width:126.6px;height:9.57px;border-right:1px solid #d9d9d9;border-bottom:1px solid #d9d9d9;"></div>
<div class="a hd" style="left:0px;top:0;width:59.1px;height:10.3px;"></div>
<div class="a hd" style="left:59.1px;top:0;width:126.6px;height:10.3px;"></div>
</div>
<div class="a" style="left:392.7px;top:301px;font-size:6.34px;line-height:8px;color:#1c1c2a;width:58.6px;text-align:center;letter-spacing:-0.230px;">Скидка / наценка</div>
<div class="a" style="left:451.8px;top:301px;font-size:6.34px;line-height:8px;color:#1c1c2a;width:126.1px;text-align:center;letter-spacing:-0.230px;">Комментарий</div>
<div class="a" style="left:578.4px;top:299.3px;width:8.8px;height:65.5px;background:#f3f3f3;"></div>
<svg style="left:580.6px;top:302.9px" width="4.4" height="2.8" viewBox="0 0 4.4 2.8"><path d="M0.3 2.5 L2.2 0.5 L4.1 2.5" stroke="#c8c8c8" stroke-width="1" fill="none"/></svg>
<svg style="left:580.6px;top:358.6px" width="4.4" height="2.8" viewBox="0 0 4.4 2.8"><path d="M0.3 0.3 L2.2 2.3 L4.1 0.3" stroke="#c8c8c8" stroke-width="1" fill="none"/></svg>
<div class="a" style="left:392.7px;top:335px;font-size:6.34px;line-height:8px;color:#9c9c9c;width:185.7px;text-align:center;letter-spacing:-0.230px;">Скидок нет</div>
<div class="a" style="left:12px;top:383px;font-size:17.3px;line-height:21px;color:#0a0a0a;font-family:'DejaVu Sans','Liberation Sans',sans-serif;-webkit-text-stroke:0.35px #0a0a0a;">Сумма: 37912,00</div>
<div class="a" style="left:169px;top:376px;font-size:6.35px;line-height:8px;color:#34529a;font-weight:bold;letter-spacing:-0.087px;">Примечание:</div>
<div class="a" style="left:169px;top:383.2px;width:223.7px;height:32.4px;background:#fff;border:1px solid #b2b6be;"></div>
<div class="a" style="left:172px;top:386px;font-size:6.5px;line-height:8px;letter-spacing:-0.236px;">Сообщить о дополнительных услугах и курсах по обучению.</div>
<div class="a btn" style="left:394.3px;top:375.3px;width:39.1px;height:41.2px;"></div>
<div class="a btn" style="left:434.8px;top:375.3px;width:38.6px;height:41.2px;border-color:#d9d9d9;background:#ececec;"></div>
<div class="a btn" style="left:475.3px;top:375.3px;width:39.2px;height:41.2px;"></div>
<div class="a btn" style="left:516px;top:375.3px;width:38.8px;height:41.2px;"></div>
<div class="a btn" style="left:556.2px;top:375.3px;width:39.1px;height:41.2px;"></div>
<svg style="left:400.4px;top:392px" width="8" height="8" viewBox="0 0 8 8"><defs><linearGradient id="gg" x1="0" y1="0" x2="0" y2="1"><stop offset="0" stop-color="#7fd46f"/><stop offset="1" stop-color="#2fa32c"/></linearGradient><linearGradient id="rg" x1="0" y1="0" x2="0" y2="1"><stop offset="0" stop-color="#f08a6a"/><stop offset="1" stop-color="#d8401f"/></linearGradient></defs><rect x=".3" y=".3" width="7.4" height="7.4" rx="1.2" fill="url(#gg)" stroke="#3c9c37" stroke-width=".6"/><path d="M1.8 4.1 L3.3 5.7 L6.3 2.1" stroke="#fff" stroke-width="1.3" fill="none"/></svg>
<div class="a" style="left:411px;top:394px;font-size:6.13px;line-height:7px;color:#111;letter-spacing:-0.222px;">ОК</div>
<div class="a" style="left:434.8px;top:394px;font-size:6.13px;line-height:7px;color:#a4a4a4;width:38.6px;text-align:center;letter-spacing:-0.222px;">Сохранить</div>
<div class="a" style="left:475.3px;top:390px;font-size:6.45px;line-height:8px;color:#111;width:39.2px;text-align:center;letter-spacing:-0.234px;">Печать</div>
<div class="a" style="left:475.3px;top:397px;font-size:6.45px;line-height:8px;color:#111;width:39.2px;text-align:center;letter-spacing:-0.234px;">ТКП</div>
<div class="a" style="left:516px;top:386px;font-size:6.45px;line-height:8px;color:#111;width:38.8px;text-align:center;letter-spacing:-0.234px;">Печать</div>
<div class="a" style="left:516px;top:393px;font-size:6.45px;line-height:8px;color:#111;width:38.8px;text-align:center;letter-spacing:-0.234px;">расчета</div>
<div class="a" style="left:516px;top:400px;font-size:6.45px;line-height:8px;color:#111;width:38.8px;text-align:center;letter-spacing:-0.234px;">ТКП</div>
<svg style="left:560px;top:392px" width="8" height="8" viewBox="0 0 8 8"><rect x=".3" y=".3" width="7.4" height="7.4" rx="1.2" fill="url(#rg)" stroke="#c23a1c" stroke-width=".6"/><path d="M2.2 2.2 L5.8 5.8 M5.8 2.2 L2.2 5.8" stroke="#fff" stroke-width="1.3" fill="none"/></svg>
<div class="a" style="left:570.7px;top:395px;font-size:6.07px;line-height:7px;color:#111;letter-spacing:-0.220px;">Отмена</div>
</body>
</html>
